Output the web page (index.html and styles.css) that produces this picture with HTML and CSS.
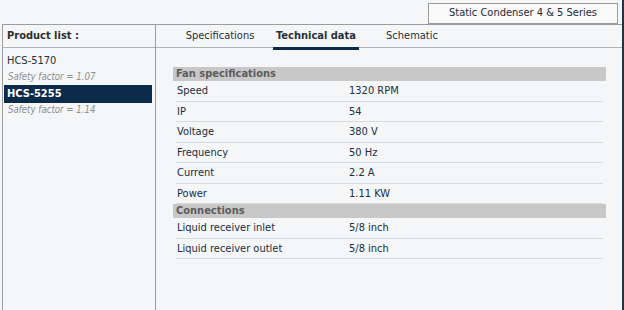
FILE: index.html
```html
<!DOCTYPE html>
<html>
<head>
<meta charset="utf-8">
<link rel="stylesheet" href="styles.css">
</head>
<body>
<div class="page">
  <div class="topbar">
    <div class="series">Static Condenser 4 &amp; 5 Series</div>
  </div>
  <div class="frame">
    <div class="sidebar">
      <div class="side-head">Product list :</div>
      <div class="list">
        <div class="item">
          <div class="name">HCS-5170</div>
          <div class="safety">Safety factor = 1.07</div>
        </div>
        <div class="item">
          <div class="name selected">HCS-5255</div>
          <div class="safety">Safety factor = 1.14</div>
        </div>
      </div>
    </div>
    <div class="main">
      <div class="tabs">
        <div class="tab"><span>Specifications</span></div>
        <div class="tab active"><span>Technical data</span></div>
        <div class="tab"><span>Schematic</span></div>
      </div>
      <div class="content">
        <div class="section">Fan specifications</div>
        <div class="row"><div class="label">Speed</div><div class="value">1320 RPM</div></div>
        <div class="row"><div class="label">IP</div><div class="value">54</div></div>
        <div class="row"><div class="label">Voltage</div><div class="value">380 V</div></div>
        <div class="row"><div class="label">Frequency</div><div class="value">50 Hz</div></div>
        <div class="row"><div class="label">Current</div><div class="value">2.2 A</div></div>
        <div class="row"><div class="label">Power</div><div class="value">1.11 KW</div></div>
        <div class="section">Connections</div>
        <div class="row"><div class="label">Liquid receiver inlet</div><div class="value">5/8 inch</div></div>
        <div class="row"><div class="label">Liquid receiver outlet</div><div class="value">5/8 inch</div></div>
      </div>
    </div>
  </div>
</div>
</body>
</html>
```

FILE: styles.css
```css
html, body {
  margin: 0;
  padding: 0;
  background: #f4f6f8;
}
body {
  font-family: "DejaVu Sans Condensed", "DejaVu Sans", sans-serif;
  font-size: 11px;
  color: #202e3c;
}
.page {
  width: 622px;
  height: 310px;
  border-right: 2px solid #27323e;
  display: flex;
  flex-direction: column;
  overflow: hidden;
}
.topbar {
  height: 24px;
  display: flex;
  justify-content: flex-end;
  align-items: flex-start;
  padding-top: 3px;
  box-sizing: border-box;
}
.series {
  width: 188px;
  height: 19px;
  border: 1px solid #9a9a9a;
  background: #f9f9f9;
  margin-right: 4px;
  text-align: center;
  line-height: 18px;
  color: #1e2a36;
  font-size: 11px;
}
.frame {
  flex: 1;
  margin-left: 2px;
  border-left: 1px solid #9c9c9c;
  border-top: 1px solid #9c9c9c;
  display: flex;
}
.sidebar {
  width: 152px;
  border-right: 1px solid #9c9c9c;
  display: flex;
  flex-direction: column;
}
.side-head {
  height: 22px;
  border-bottom: 1px solid #b4b4b4;
  line-height: 21px;
  padding-left: 4px;
  font-weight: bold;
  color: #2e2e2e;
  font-size: 11px;
}
.list {
  padding: 4px 3px 0 1px;
}
.name {
  height: 18px;
  line-height: 18px;
  padding-left: 3px;
  font-size: 11px;
  color: #26313c;
}
.name.selected {
  background: #0c2a4a;
  color: #ffffff;
  font-weight: bold;
}
.safety {
  height: 14px;
  line-height: 14px;
  padding-left: 4px;
  font-style: italic;
  font-size: 9.6px;
  color: #8f8f8f;
  margin-bottom: 1px;
}
.main {
  flex: 1;
  display: flex;
  flex-direction: column;
}
.tabs {
  height: 22px;
  border-bottom: 1px solid #b4b4b4;
  display: flex;
  padding-left: 16px;
}
.tab {
  width: 96px;
  display: flex;
  justify-content: center;
  font-size: 11px;
  color: #26313c;
}
.tab span {
  display: block;
  height: 22px;
  line-height: 21px;
  padding: 0 3px;
  box-sizing: border-box;
}
.tab.active span {
  font-weight: bold;
  border-bottom: 3px solid #0c2a4a;
  height: 25px;
  position: relative;
  z-index: 1;
}
.content {
  padding: 19px 0 0 17px;
  width: 433px;
}
.section {
  height: 14px;
  line-height: 14px;
  background: #c8c8c8;
  color: #5c5c5c;
  font-weight: bold;
  padding-left: 3px;
  font-size: 11px;
}
.row {
  height: 20.5px;
  margin: 0 3px;
  border-bottom: 1px solid #d8dadc;
  box-sizing: border-box;
  display: flex;
  align-items: center;
}
.label {
  width: 173px;
  padding-left: 1px;
  box-sizing: border-box;
}
.value {
  flex: 1;
}
```
